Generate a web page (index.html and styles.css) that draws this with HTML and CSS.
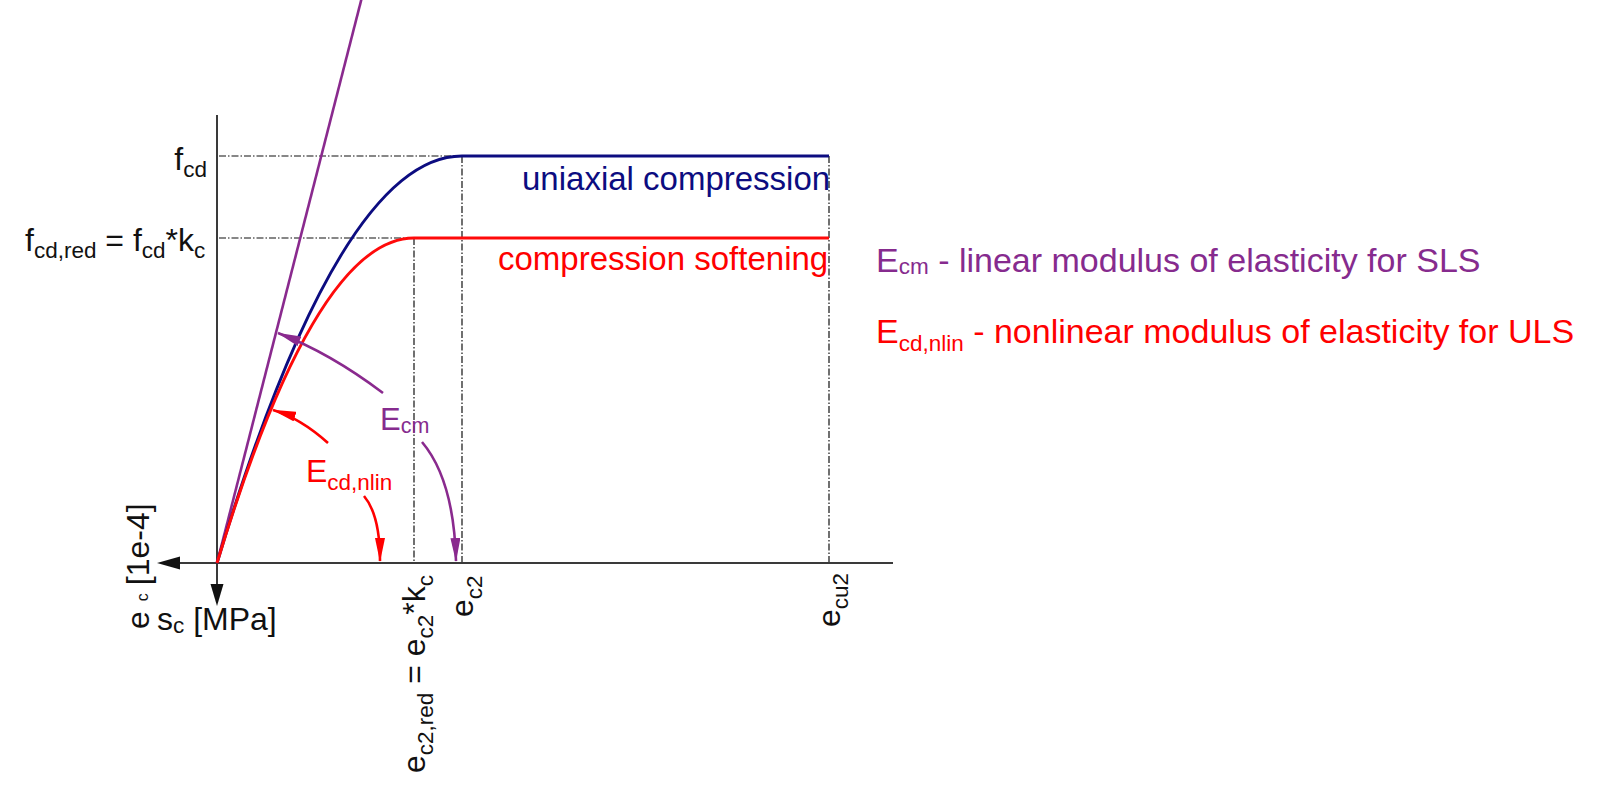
FILE: index.html
```html
<!DOCTYPE html>
<html lang="en">
<head>
<meta charset="utf-8">
<title>Parabola-rectangle stress-strain diagram</title>
<link rel="stylesheet" href="styles.css">
</head>
<body>
<svg class="diagram" width="1600" height="800" viewBox="0 0 1600 800">
  <defs>
    <marker id="ah-purple" markerUnits="userSpaceOnUse" markerWidth="24" markerHeight="10" viewBox="0 0 24 10" refX="23" refY="5" orient="auto">
      <path class="fill-purple" d="M0,0 L24,5 L0,10 Z"/>
    </marker>
    <marker id="ah-red" markerUnits="userSpaceOnUse" markerWidth="24" markerHeight="10" viewBox="0 0 24 10" refX="23" refY="5" orient="auto">
      <path class="fill-red" d="M0,0 L24,5 L0,10 Z"/>
    </marker>
  </defs>

  <!-- dash-dot guide lines -->
  <g class="guide">
    <line x1="219" y1="156" x2="462" y2="156"/>
    <line x1="219" y1="238" x2="414" y2="238"/>
    <line x1="414" y1="238" x2="414" y2="563"/>
    <line x1="462" y1="156" x2="462" y2="563"/>
    <line x1="829" y1="156" x2="829" y2="563"/>
  </g>

  <!-- axes -->
  <g class="axis">
    <line x1="217" y1="115" x2="217" y2="588"/>
    <line x1="175" y1="563" x2="893" y2="563"/>
  </g>
  <polygon class="fill-axis" points="157,563 180,556.5 180,569.5"/>
  <polygon class="fill-axis" points="217,606 210.5,584 223.5,584"/>

  <!-- curves -->
  <line class="ln-purple" x1="217" y1="563" x2="362" y2="-3"/>
  <path class="ln-navy" d="M217,563 Q339.5,156 462,156 L829,156"/>
  <path class="ln-red" d="M217,563 Q315.5,238 414,238 L829,238"/>

  <!-- pointer arrows -->
  <path class="arrow-purple" d="M383,393 Q330,353 278,333" marker-end="url(#ah-purple)"/>
  <path class="arrow-red" d="M328,443 Q300,418 273,410" marker-end="url(#ah-red)"/>
  <path class="arrow-purple" d="M422,442 Q454,480 456,561" marker-end="url(#ah-purple)"/>
  <path class="arrow-red" d="M364,496 Q380,515 380,561" marker-end="url(#ah-red)"/>

  <!-- y labels -->
  <text class="lbl" x="207" y="170" text-anchor="end">f<tspan class="sub" dy="7">cd</tspan></text>
  <text class="lbl" x="25" y="251">f<tspan class="sub" dy="7">cd,red</tspan><tspan dy="-7"> = f</tspan><tspan class="sub" dy="7">cd</tspan><tspan dy="-7">*k</tspan><tspan class="sub" dy="7">c</tspan></text>

  <!-- curve names -->
  <text class="curve-name t-navy" x="522" y="190">uniaxial compression</text>
  <text class="curve-name t-red" x="498" y="270">compression softening</text>

  <!-- moduli in graph -->
  <text class="mod-cm t-purple" x="380" y="430">E<tspan class="sub-sm" dy="3">cm</tspan></text>
  <text class="lbl t-red" x="306" y="482">E<tspan class="sub" dy="8">cd,nlin</tspan></text>

  <!-- axis labels -->
  <text class="lbl" transform="translate(149,629) rotate(-90)">e<tspan class="tiny" dx="10" dy="-1">c</tspan><tspan dx="8" dy="1">[1e-4]</tspan></text>
  <text class="lbl" x="157" y="630">s<tspan class="sub" dy="3">c</tspan><tspan dy="-3"> [MPa]</tspan></text>
  <text class="lbl" transform="translate(425,773) rotate(-90)">e<tspan class="sub" dy="8">c2,red</tspan><tspan dy="-8"> = e</tspan><tspan class="sub" dy="8">c2</tspan><tspan dy="-8">*k</tspan><tspan class="sub" dy="8">c</tspan></text>
  <text class="lbl" transform="translate(473,617) rotate(-90)">e<tspan class="sub" dy="9">c2</tspan></text>
  <text class="lbl" transform="translate(840,627) rotate(-90)">e<tspan class="sub" dy="8">cu2</tspan></text>

  <!-- legend -->
  <text class="legend t-purple" x="876" y="272">E<tspan class="legend-sub" dy="2">cm</tspan><tspan dy="-2"> - linear modulus of elasticity for SLS</tspan></text>
  <text class="legend t-red" x="876" y="343">E<tspan class="legend-sub" dy="8">cd,nlin</tspan><tspan dy="-8"> - nonlinear modulus of elasticity for ULS</tspan></text>
</svg>
</body>
</html>
```

FILE: styles.css
```css
html, body {
  margin: 0;
  padding: 0;
  background: #ffffff;
}

.diagram {
  display: block;
  font-family: "Liberation Sans", Arial, sans-serif;
}

.guide line {
  stroke: #111111;
  stroke-width: 1.2;
  stroke-dasharray: 7 2 1.5 2;
  fill: none;
}

.axis line {
  stroke: #3a3a3a;
  stroke-width: 2;
}

.fill-axis { fill: #111111; }
.fill-purple { fill: #8a2a8e; }
.fill-red { fill: #ff0000; }

.ln-purple {
  stroke: #8a2a8e;
  stroke-width: 2.6;
  fill: none;
}

.ln-navy {
  stroke: #0c0c80;
  stroke-width: 3;
  fill: none;
}

.ln-red {
  stroke: #ff0a0a;
  stroke-width: 3;
  fill: none;
}

.arrow-purple {
  stroke: #8a2a8e;
  stroke-width: 2.6;
  fill: none;
}

.arrow-red {
  stroke: #ff0000;
  stroke-width: 2.6;
  fill: none;
}

.lbl {
  font-size: 32px;
  fill: #111111;
}

.lbl.t-red { fill: #ff0000; }

.sub { font-size: 22.5px; }
.sub-sm { font-size: 21.5px; }
.tiny { font-size: 16px; }

.curve-name {
  font-size: 33px;
}

.mod-cm {
  font-size: 31px;
}

.legend {
  font-size: 34px;
}

.legend-sub { font-size: 22.5px; }

.t-navy { fill: #0c0c80; }
.t-red { fill: #ff0000; }
.t-purple { fill: #862b8e; }
```
